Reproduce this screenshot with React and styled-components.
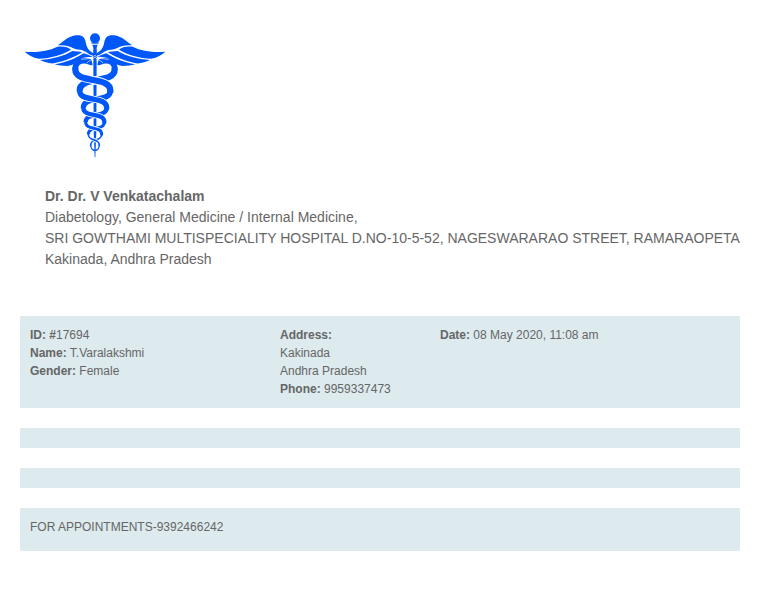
import React from "react";
import styled, { createGlobalStyle } from "styled-components";

const GlobalStyle = createGlobalStyle`
  body {
    margin: 0;
    background: #fff;
    color: #666;
    font-family: "Liberation Sans", Arial, sans-serif;
    font-size: 12px;
    line-height: 18px;
  }
`;

const Page = styled.main`
  padding: 28px 20px 60px;
`;

const Logo = styled.svg`
  display: block;
  width: 150px;
  height: 134px;
`;

const Doctor = styled.header`
  margin: 24px 0 46px;
  padding-left: 25px;
  font-size: 14px;
  line-height: 21px;
`;

const DoctorName = styled.h1`
  margin: 0;
  font-size: inherit;
  font-weight: bold;
`;

const Line = styled.p`
  margin: 0;
  white-space: ${(p) => (p.$nowrap ? "nowrap" : "normal")};
`;

const Sections = styled.div`
  display: grid;
  gap: 20px;
`;

const Panel = styled.section`
  padding: 10px;
  background: #ddeaee;
`;

const PatientPanel = styled(Panel)`
  display: grid;
  grid-template-columns: 250px 160px 1fr;
`;

const Footer = styled.footer`
  padding: 10px 10px 15px;
  background: #ddeaee;
`;

const BLUE = "#0057f8";

const loops = [
  { y: 124, half: 59 },
  { y: 188, half: 46 },
  { y: 239, half: 35 },
  { y: 282, half: 28 },
  { y: 319, half: 20 },
  { y: 352, half: 13 },
];
const widths = [19, 16, 13, 9, 5];

function strand(i, side) {
  const a = loops[i];
  const b = loops[i + 1];
  const bend = (b.y - a.y) * 0.72;
  const x1 = 225 + side * a.half;
  const x2 = 225 - side * b.half;
  return `M${x1} ${a.y}C${x1} ${a.y + bend} ${x2} ${b.y - bend} ${x2} ${b.y}`;
}

function Wing() {
  return (
    <>
      <path d="M113 52C130 42 142 26 166 22C186 19 194 27 197 42C200 60 207 68 220 76V83C206 80 200 71 190 68C184 64 170 67 160 61C148 53 134 51 113 52Z" />
      <path d="M14 71C48 74 84 70 112 56C130 54 144 57 153 65C128 80 92 91 57 92C38 89 24 80 14 71Z" />
      <path d="M60 96C98 93 132 84 157 69C168 71 178 70 187 73C166 86 136 99 102 106C86 107 72 102 60 96Z" />
      <path d="M104 109C138 103 168 91 191 76C201 78 208 83 219 86C199 87 188 88 180 95C169 105 157 112 143 114C128 114 115 113 104 109Z" />
    </>
  );
}

function Head() {
  return <path d="M166 126C164 104 178 96 202 99C208 101 212 104 216 103" strokeWidth="17" />;
}

function Caduceus() {
  return (
    <Logo viewBox="0 0 450 402" role="img" aria-label="Caduceus" fill={BLUE}>
      <path d="M220 100H230L229 310L226 388H224L221 310Z" />
      <g fill="none" stroke={BLUE} strokeLinejoin="round">
        <Head />
        <g transform="matrix(-1 0 0 1 450 0)">
          <Head />
        </g>
        {[1, -1].map((side) =>
          widths.map((w, i) => (
            <React.Fragment key={`${side}-${i}`}>
              <path d={strand(i, side)} stroke="#fff" strokeWidth={w + 5} />
              <path d={strand(i, side)} strokeWidth={w} strokeLinecap="round" />
            </React.Fragment>
          ))
        )}
        <path d="M212 351C212 372 238 372 238 351" strokeWidth="4" />
      </g>
      <Wing />
      <g transform="matrix(-1 0 0 1 450 0)">
        <Wing />
      </g>
      <path d="M217 50H233L230 59L231 86L228 108H222L219 86L220 59Z" />
      <path d="M214 45H236" stroke={BLUE} strokeWidth="4" />
      <circle cx="225" cy="31" r="15" />
      <g fill="none" stroke="#fff" strokeWidth="2">
        <path d="M184 94C200 92 213 94 225 82C237 94 250 92 266 94" />
        <path d="M201 105C208 95 216 98 225 87C234 98 242 95 249 105" />
      </g>
    </Logo>
  );
}

export default function App() {
  return (
    <>
      <GlobalStyle />
      <Page>
        <Caduceus />
        <Doctor>
          <DoctorName>Dr. Dr. V Venkatachalam</DoctorName>
          <Line>Diabetology, General Medicine / Internal Medicine,</Line>
          <Line $nowrap>
            SRI GOWTHAMI MULTISPECIALITY HOSPITAL D.NO-10-5-52, NAGESWARARAO STREET, RAMARAOPETA
          </Line>
          <Line>Kakinada, Andhra Pradesh</Line>
        </Doctor>
        <Sections>
          <PatientPanel>
            <div>
              <Line><b>ID: #</b>17694</Line>
              <Line><b>Name:</b> T.Varalakshmi</Line>
              <Line><b>Gender:</b> Female</Line>
            </div>
            <div>
              <Line><b>Address:</b></Line>
              <Line>Kakinada</Line>
              <Line>Andhra Pradesh</Line>
              <Line><b>Phone:</b> 9959337473</Line>
            </div>
            <Line><b>Date:</b> 08 May 2020, 11:08 am</Line>
          </PatientPanel>
          <Panel />
          <Panel />
          <Footer>FOR APPOINTMENTS-9392466242</Footer>
        </Sections>
      </Page>
    </>
  );
}
